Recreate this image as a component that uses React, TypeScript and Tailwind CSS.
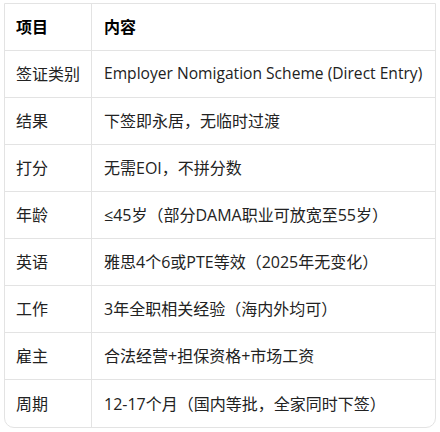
const rows: [string, string][] = [
  ["签证类别", "Employer Nomigation Scheme (Direct Entry)"],
  ["结果", "下签即永居，无临时过渡"],
  ["打分", "无需EOI，不拼分数"],
  ["年龄", "≤45岁（部分DAMA职业可放宽至55岁）"],
  ["英语", "雅思4个6或PTE等效（2025年无变化）"],
  ["工作", "3年全职相关经验（海内外均可）"],
  ["雇主", "合法经营+担保资格+市场工资"],
  ["周期", "12-17个月（国内等批，全家同时下签）"],
];

export default function App() {
  return (
    <div
      className="w-[440px] h-[432px] bg-white overflow-hidden pt-[3px] px-[4px]"
      style={{ fontFamily: '"Open Sans", "Noto Sans CJK SC", sans-serif' }}
    >
      <div className="border border-[#e3e3e3] rounded-b-[10px] text-[16px] text-[#222]">
        <div className="flex h-[47px] items-center border-b border-[#e3e3e3]">
          <div className="w-[87px] h-full flex items-center pl-[11px] border-r border-[#e3e3e3] font-bold text-black">
            项目
          </div>
          <div className="flex-1 pl-[12px] font-bold text-black">内容</div>
        </div>
        {rows.map(([k, v], i) => (
          <div
            key={k}
            className={
              i < rows.length - 1
                ? "flex h-[47px] items-center border-b border-[#e3e3e3]"
                : "flex h-[47px] items-center"
            }
          >
            <div className="w-[87px] h-full flex items-center pl-[11px] border-r border-[#e3e3e3]">
              {k}
            </div>
            <div
              className={
                i === 0
                  ? "flex-1 pl-[12px] whitespace-nowrap text-[15.6px]"
                  : "flex-1 pl-[12px] whitespace-nowrap"
              }
            >
              {v}
            </div>
          </div>
        ))}
      </div>
    </div>
  );
}
